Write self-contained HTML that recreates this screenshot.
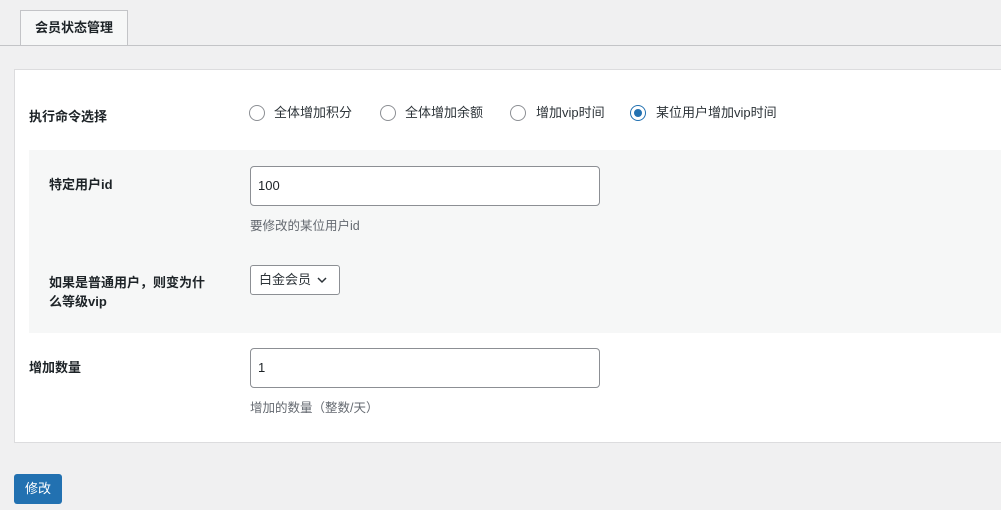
<!DOCTYPE html>
<html><head><meta charset="utf-8"><style>
*{box-sizing:border-box;margin:0;padding:0}
body{width:1001px;height:510px;overflow:hidden;background:#f0f0f1;font-family:"Liberation Sans","Noto Sans CJK SC",sans-serif;font-size:13px;color:#1d2327;position:relative}
.a{position:absolute}
.tab{left:20px;top:10px;width:108px;height:36px;background:#f6f7f7;border:1px solid #c3c4c7;border-bottom:none;font-weight:bold;font-size:13px;line-height:34px;text-align:center}
.line{left:0;top:45px;width:1001px;height:1px;background:#c3c4c7}
.card{left:14px;top:69px;width:1000px;height:374px;background:#fff;border:1px solid #dcdcde}
.grey{left:29px;top:150px;width:980px;height:183px;background:#f6f7f7}
.lbl{font-weight:bold;font-size:13px;line-height:18px}
.radio{width:16px;height:16px;border:1px solid #8c8f94;border-radius:50%;background:#fff}
.radio.on{border-color:#2271b1}
.radio.on::after{content:"";position:absolute;left:3px;top:3px;width:8px;height:8px;border-radius:50%;background:#2271b1}
.rt{font-size:13px;line-height:16px;color:#2c3338}
.inp{width:350px;height:40px;border:1px solid #8c8f94;border-radius:4px;background:#fff;padding-left:7px;line-height:38px;font-size:13px}
.desc{color:#646970;font-size:12.5px}
.sel{left:250px;top:265px;width:90px;height:30px;border:1px solid #8c8f94;border-radius:3px;background:#fff;padding-left:8px;line-height:28px;font-size:13px;color:#2c3338}
.btn{left:14px;top:474px;width:48px;height:30px;background:#2271b1;border-radius:3px;color:#fff;line-height:30px;text-align:center;font-size:13px}
</style></head><body>
<div class="a tab">会员状态管理</div>
<div class="a line"></div>
<div class="a card"></div>
<div class="a grey"></div>
<div class="a lbl" style="left:29px;top:108px">执行命令选择</div>
<div class="a radio" style="left:249px;top:105px"></div><div class="a rt" style="left:274px;top:105px">全体增加积分</div>
<div class="a radio" style="left:380px;top:105px"></div><div class="a rt" style="left:405px;top:105px">全体增加余额</div>
<div class="a radio" style="left:510px;top:105px"></div><div class="a rt" style="left:536px;top:105px">增加vip时间</div>
<div class="a radio on" style="left:630px;top:105px"></div><div class="a rt" style="left:656px;top:105px">某位用户增加vip时间</div>
<div class="a lbl" style="left:49px;top:176px">特定用户id</div>
<div class="a inp" style="left:250px;top:166px">100</div>
<div class="a desc" style="left:250px;top:215px">要修改的某位用户id</div>
<div class="a lbl" style="left:49px;top:273px;line-height:19px">如果是普通用户，则变为什<br>么等级vip</div>
<div class="a sel">白金会员 <svg width="10" height="8" viewBox="0 0 10 8" style="margin-left:2px"><path d="M1 2l4 4 4-4" stroke="#2c3338" stroke-width="1.5" fill="none"/></svg></div>
<div class="a lbl" style="left:29px;top:359px">增加数量</div>
<div class="a inp" style="left:250px;top:348px">1</div>
<div class="a desc" style="left:250px;top:397px">增加的数量（整数/天）</div>
<div class="a btn">修改</div>
</body></html>
